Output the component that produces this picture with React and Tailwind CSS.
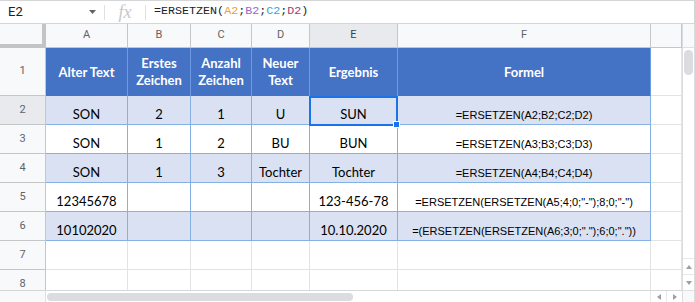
import React from "react";

const W = [
  "w-[46px]",
  "w-[82px]",
  "w-[63px]",
  "w-[61px]",
  "w-[58px]",
  "w-[88px]",
  "w-[253px]",
  "w-[31px]",
];

const letters = ["A", "B", "C", "D", "E", "F", ""];

const header = ["Alter Text", "Erstes\nZeichen", "Anzahl\nZeichen", "Neuer\nText", "Ergebnis", "Formel"];

const rows = [
  { band: true, cells: ["SON", "2", "1", "U", "SUN", "=ERSETZEN(A2;B2;C2;D2)"] },
  { band: false, cells: ["SON", "1", "2", "BU", "BUN", "=ERSETZEN(A3;B3;C3;D3)"] },
  { band: true, cells: ["SON", "1", "3", "Tochter", "Tochter", "=ERSETZEN(A4;B4;C4;D4)"] },
  { band: false, cells: ["12345678", "", "", "", "123-456-78", '=ERSETZEN(ERSETZEN(A5;4;0;"-");8;0;"-")'] },
  { band: true, cells: ["10102020", "", "", "", "10.10.2020", '=(ERSETZEN(ERSETZEN(A6;3;0;".");6;0;"."))'] },
];

function RowHead({ n, h, selected }) {
  return (
    <div
      className={`${W[0]} ${h} shrink-0 flex items-center justify-center border-r border-b border-[#c4c7c5] text-[11px] text-[#5f6368] ${
        selected ? "bg-[#e8eaed]" : "bg-[#f8f9fa]"
      }`}
      style={{ fontFamily: "Roboto, 'Liberation Sans', sans-serif" }}
    >
      {n}
    </div>
  );
}

export default function App() {
  return (
    <div
      className="w-[695px] h-[302px] overflow-hidden bg-white flex flex-col"
      style={{ fontFamily: "Lato, 'Liberation Sans', sans-serif" }}
    >
      {/* Formula bar */}
      <div className="h-[24px] shrink-0 flex items-center border-t border-r border-b border-[#d4d6d8] bg-white">
        <div
          className="w-[104px] h-full flex items-center pl-[8px] pr-[8px] text-[13px] text-[#202124]"
          style={{ fontFamily: "Roboto, 'Liberation Sans', sans-serif" }}
        >
          <span className="flex-1">E2</span>
          <svg width="7" height="4" viewBox="0 0 7 4">
            <path d="M0 0 L7 0 L3.5 4 Z" fill="#5f6368" />
          </svg>
        </div>
        <div className="w-px h-[15px] bg-[#e0e0e0]" />
        <div
          className="w-[40px] h-full flex items-center justify-center text-[18px] italic text-[#c7c7c7]"
          style={{ fontFamily: "'Liberation Serif', serif" }}
        >
          fx
        </div>
        <div className="w-px h-[15px] bg-[#e0e0e0]" />
        <div
          className="pl-[8px] text-[11.7px] text-[#202124]"
          style={{ fontFamily: "'Liberation Mono', 'DejaVu Sans Mono', monospace" }}
        >
          =ERSETZEN(<span className="text-[#f0a030]">A2</span>;<span className="text-[#9a66cc]">B2</span>;
          <span className="text-[#35a5dc]">C2</span>;<span className="text-[#a23e66]">D2</span>)
        </div>
      </div>

      <div className="flex flex-1 min-h-0">
        {/* main grid */}
        <div className="w-[682px] flex flex-col">
          {/* column header */}
          <div className="h-[24px] flex shrink-0">
            <div className={`${W[0]} h-full shrink-0 bg-[#f8f9fa] border-r-[4px] border-b-[4px] border-[#c4c4c4]`} />
            {letters.map((l, i) => (
              <div
                key={i}
                className={`${W[i + 1]} h-full shrink-0 flex items-center justify-center border-r border-b border-[#c4c7c5] text-[11px] ${
                  l === "E" ? "bg-[#e8eaed] text-[#3c4043]" : "bg-[#f8f9fa] text-[#5f6368]"
                }`}
                style={{ fontFamily: "Roboto, 'Liberation Sans', sans-serif" }}
              >
                {l}
              </div>
            ))}
          </div>

          {/* rows area */}
          <div className="relative h-[242px] overflow-hidden flex flex-col shrink-0">
            {/* row 1 header */}
            <div className="flex h-[48px] shrink-0">
              <RowHead n="1" h="h-[48px]" />
              {header.map((t, i) => (
                <div
                  key={i}
                  className={`${W[i + 1]} h-full shrink-0 flex items-center justify-center text-center whitespace-pre-line bg-[#4472c4] text-white font-bold text-[13px] leading-[17px] border-r border-[#6d9ae0]`}
                >
                  {t}
                </div>
              ))}
              <div className={`${W[7]} h-full shrink-0 border-r border-b border-[#e2e3e3] bg-white`} />
            </div>

            {rows.map((r, ri) => (
              <div key={ri} className="flex h-[29px] shrink-0">
                <RowHead n={String(ri + 2)} h="h-[29px]" selected={ri === 0} />
                {r.cells.map((c, ci) => (
                  <div
                    key={ci}
                    className={`${W[ci + 1]} h-full shrink-0 flex items-end justify-center whitespace-nowrap border-r border-b border-[#85b0e4] text-black leading-[16px] ${
                      ci === 5 ? "text-[11px] pb-[1px]" : "text-[13px] pb-[2px]"
                    } ${r.band ? "bg-[#d9e1f2]" : "bg-white"}`}
                    style={ci === 5 ? { fontFamily: "'Liberation Sans', Arial, sans-serif" } : undefined}
                  >
                    {c}
                  </div>
                ))}
                <div className={`${W[7]} h-full shrink-0 border-r border-b border-[#e2e3e3] bg-white`} />
              </div>
            ))}

            {[7, 8].map((n) => (
              <div key={n} className="flex h-[29px] shrink-0">
                <RowHead n={String(n)} h="h-[29px]" />
                {[1, 2, 3, 4, 5, 6, 7].map((ci) => (
                  <div key={ci} className={`${W[ci]} h-full shrink-0 border-r border-b border-[#e2e3e3] bg-white`} />
                ))}
              </div>
            ))}

            {/* selection E2 */}
            <div className="absolute left-[309px] top-[48px] w-[89px] h-[30px] border-2 border-[#1a73e8]" />
            <div className="absolute left-[393px] top-[73px] w-[7px] h-[7px] bg-[#1a73e8] border border-white" />
          </div>

          {/* horizontal scrollbar */}
          <div className="flex-1 flex border-t border-[#d4d6d8] bg-white">
            <div className="w-[46px] h-full shrink-0 border-r border-[#e0e0e0] bg-[#f8f9fa]" />
            <div className="flex-1 flex items-center pl-[1px]">
              <div className="w-[306px] h-[8px] rounded-full bg-[#dadce0]" />
            </div>
            <div className="w-[16px] h-full flex items-center justify-center border-l border-[#e8e8e8]">
              <svg width="4" height="6" viewBox="0 0 4 6">
                <path d="M4 0 L4 6 L0 3 Z" fill="#9aa0a6" />
              </svg>
            </div>
            <div className="w-[16px] h-full flex items-center justify-center border-l border-[#e8e8e8]">
              <svg width="4" height="6" viewBox="0 0 4 6">
                <path d="M0 0 L0 6 L4 3 Z" fill="#9aa0a6" />
              </svg>
            </div>
          </div>
        </div>

        {/* vertical scrollbar */}
        <div className="w-[13px] flex flex-col border-l border-r border-[#dadce0] bg-white">
          <div className="h-[24px] shrink-0 bg-[#f8f9fa] border-b border-[#e0e0e0]" />
          <div className="flex-1 flex flex-col items-center pt-[2px]">
            <div className="w-[9px] h-[25px] rounded-full bg-[#dadce0]" />
          </div>
          <div className="h-[16px] flex items-center justify-center border-t border-[#e8e8e8]">
            <svg width="6" height="4" viewBox="0 0 6 4">
              <path d="M0 4 L6 4 L3 0 Z" fill="#9aa0a6" />
            </svg>
          </div>
          <div className="h-[16px] flex items-center justify-center border-t border-[#e8e8e8]">
            <svg width="6" height="4" viewBox="0 0 6 4">
              <path d="M0 0 L6 0 L3 4 Z" fill="#9aa0a6" />
            </svg>
          </div>
          <div className="h-[12px] border-t border-[#e0e0e0] bg-[#f8f9fa]" />
        </div>
      </div>
    </div>
  );
}
